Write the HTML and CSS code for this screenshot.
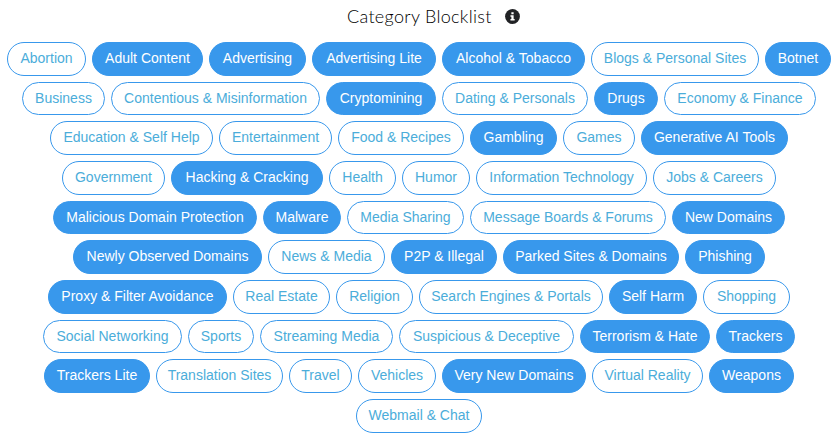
FILE: index.html
```html
<!DOCTYPE html>
<html lang="en">
<head>
<meta charset="utf-8">
<title>Category Blocklist</title>
<link rel="stylesheet" href="styles.css">
</head>
<body>
<header class="heading">
<h1 class="title">Category Blocklist</h1>
<svg class="info" viewBox="0 0 16 16" aria-hidden="true"><circle cx="8" cy="8" r="7.9" fill="#212225"/><path d="M6.8 3.4h2.4v2.2H6.8zM5.8 6.6h3.4v4.1h1.1v1.6H5.8v-1.6h1V8.2h-1z" fill="#fff"/></svg>
</header>
<main class="rows">
<div class="row row-1"><span class="pill">Abortion</span><span class="pill on">Adult Content</span><span class="pill on">Advertising</span><span class="pill on">Advertising Lite</span><span class="pill on">Alcohol &amp; Tobacco</span><span class="pill">Blogs &amp; Personal Sites</span><span class="pill on">Botnet</span></div>
<div class="row row-2"><span class="pill">Business</span><span class="pill">Contentious &amp; Misinformation</span><span class="pill on">Cryptomining</span><span class="pill">Dating &amp; Personals</span><span class="pill on">Drugs</span><span class="pill">Economy &amp; Finance</span></div>
<div class="row row-3"><span class="pill">Education &amp; Self Help</span><span class="pill">Entertainment</span><span class="pill">Food &amp; Recipes</span><span class="pill on">Gambling</span><span class="pill">Games</span><span class="pill on">Generative AI Tools</span></div>
<div class="row row-4"><span class="pill">Government</span><span class="pill on">Hacking &amp; Cracking</span><span class="pill">Health</span><span class="pill">Humor</span><span class="pill">Information Technology</span><span class="pill">Jobs &amp; Careers</span></div>
<div class="row row-5"><span class="pill on">Malicious Domain Protection</span><span class="pill on">Malware</span><span class="pill">Media Sharing</span><span class="pill">Message Boards &amp; Forums</span><span class="pill on">New Domains</span></div>
<div class="row row-6"><span class="pill on">Newly Observed Domains</span><span class="pill">News &amp; Media</span><span class="pill on">P2P &amp; Illegal</span><span class="pill on">Parked Sites &amp; Domains</span><span class="pill on">Phishing</span></div>
<div class="row row-7"><span class="pill on">Proxy &amp; Filter Avoidance</span><span class="pill">Real Estate</span><span class="pill">Religion</span><span class="pill">Search Engines &amp; Portals</span><span class="pill on">Self Harm</span><span class="pill">Shopping</span></div>
<div class="row row-8"><span class="pill">Social Networking</span><span class="pill">Sports</span><span class="pill">Streaming Media</span><span class="pill">Suspicious &amp; Deceptive</span><span class="pill on">Terrorism &amp; Hate</span><span class="pill on">Trackers</span></div>
<div class="row row-9"><span class="pill on">Trackers Lite</span><span class="pill">Translation Sites</span><span class="pill">Travel</span><span class="pill">Vehicles</span><span class="pill on">Very New Domains</span><span class="pill">Virtual Reality</span><span class="pill on">Weapons</span></div>
<div class="row row-10"><span class="pill">Webmail &amp; Chat</span></div>
</main>
</body>
</html>
```
FILE: styles.css
```css
body {
  margin: 0;
  background: #fff;
  font-family: "Liberation Sans", Arial, sans-serif;
}
.heading {
  display: flex;
  align-items: center;
  height: 33px;
  padding-left: 347px;
}
.title {
  margin: 0;
  font: 300 18px/24px Lato, sans-serif;
  letter-spacing: 0.3px;
  width: 158px;
  padding-bottom: 2px;
  white-space: nowrap;
  color: #000;
}
.info {
  width: 15px;
  height: 15px;
}
.rows {
  display: flex;
  flex-direction: column;
  gap: 6px;
  padding-top: 9px;
}
.row {
  display: grid;
  justify-content: center;
  gap: 6px;
  margin-left: 3px;
}
.row-1 { grid-template-columns: 79px 111px 97px 124px 143px 168px 66px; }
.row-2 { grid-template-columns: 83px 209px 110px 146px 64px 152px; }
.row-3 { grid-template-columns: 163px 113px 126px 87px 72px 147px; }
.row-4 { grid-template-columns: 103px 152px 67px 68px 171px 123px; }
.row-5 { grid-template-columns: 204px 78px 117px 196px 113px; }
.row-6 { grid-template-columns: 189px 117px 106px 176px 80px; }
.row-7 { grid-template-columns: 179px 97px 77px 184px 88px 87px; }
.row-8 { grid-template-columns: 139px 66px 133px 175px 130px 79px; }
.row-9 { grid-template-columns: 106px 127px 63px 78px 144px 111px 85px; }
.row-10 { grid-template-columns: 126px; }
.pill {
  box-sizing: border-box;
  height: 33.67px;
  border: 1px solid #3898ec;
  border-radius: 17px;
  font-size: 14px;
  line-height: 31.67px;
  text-align: center;
  white-space: nowrap;
  color: #4badda;
}
.on {
  background: #3898ec;
  color: #fff;
}
```
